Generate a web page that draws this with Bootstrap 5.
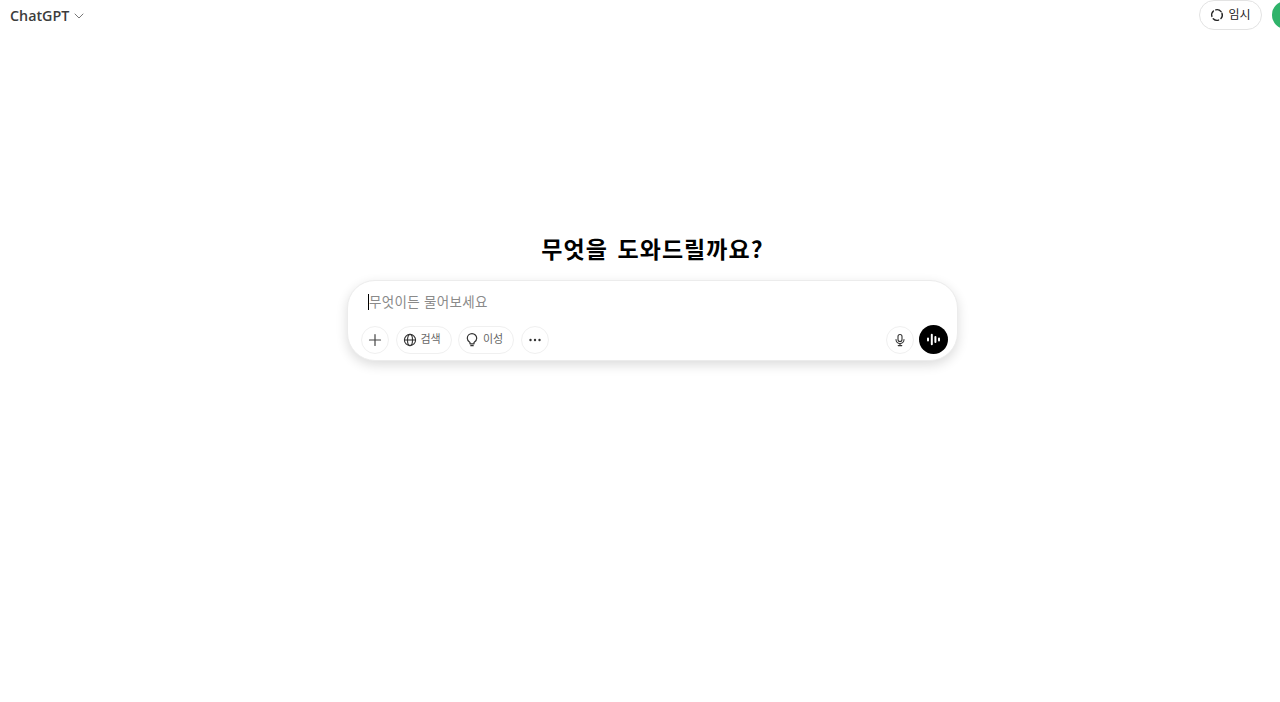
<!DOCTYPE html>
<html lang="ko">
<head>
    <meta charset="UTF-8" />
    <meta name="viewport" content="width=device-width, initial-scale=1.0" />
    <title>ChatGPT</title>
    <link href="https://cdn.jsdelivr.net/npm/bootstrap@5.3.0/dist/css/bootstrap.min.css" rel="stylesheet" />
    <style>
        html, body {
            height: 100%;
            overflow: hidden;
        }

        body {
            background-color: #fff;
            font-family: "Open Sans", "Noto Sans CJK KR", sans-serif;
            color: #0d0d0d;
        }

        .top-bar {
            height: 30px;
            padding-left: 10px;
            margin-right: -20px;
        }

        .model-name {
            font-family: "Open Sans", "Noto Sans", sans-serif;
            font-size: 14.3px;
            font-weight: 600;
            color: #3d3d3d;
            line-height: 30px;
            margin-top: 1px;
        }

        .temp-btn {
            width: 63px;
            height: 30px;
            border: 1px solid #e3e3e3;
            border-radius: 15px;
            font-size: 12px;
            color: #222;
            background: #fff;
            margin-right: 10px;
        }

        .avatar-dot {
            width: 28px;
            height: 28px;
            border-radius: 50%;
            background-color: #2fb36a;
            flex-shrink: 0;
        }

        .chat-main {
            padding-left: 25px;
            padding-top: 203px;
        }

        .chat-title {
            font-family: "Noto Sans CJK KR", sans-serif;
            font-size: 23px;
            font-weight: 700;
            line-height: 30px;
            color: #000;
            margin-bottom: 17px;
            letter-spacing: 1.05px;
            word-spacing: 2px;
        }

        .composer {
            width: 611px;
            height: 81px;
            border: 1px solid #ececec;
            border-radius: 28px;
            background: #fff;
            box-shadow: 0 4px 12px rgba(0, 0, 0, .14);
            padding: 0 9px 6px 13px;
        }

        .composer-input {
            height: 41px;
            padding-left: 7px;
            font-size: 13.5px;
            line-height: 24px;
            color: #8a8a8a;
            letter-spacing: .35px;
        }

        .caret-line {
            width: 1px;
            height: 16px;
            background: #000;
        }

        .tool-btn {
            height: 28px;
            border: 1px solid #f0f0f0;
            border-radius: 14px;
            background: #fff;
            font-size: 11px;
            color: #666;
            padding: 0;
        }

        .tool-round {
            width: 28px;
        }

        .tool-pill {
            width: 56px;
            padding-left: 6px;
        }

        .tool-row {
            gap: 6.5px;
        }

        .voice-row {
            gap: 5px;
        }

        .voice-btn {
            width: 29px;
            height: 29px;
            border-radius: 50%;
            background: #000;
        }
    </style>
</head>
<body>
    <header class="top-bar d-flex justify-content-between align-items-start">
        <div class="d-flex align-items-center gap-1">
            <span class="model-name">ChatGPT</span>
            <svg width="12" height="12" viewBox="0 0 12 12" fill="none" stroke="#777" stroke-width="1" stroke-linecap="round" stroke-linejoin="round"><path d="M2 4l4 4 4-4" /></svg>
        </div>
        <div class="d-flex align-items-center">
            <button type="button" class="temp-btn d-flex align-items-center justify-content-center gap-1 p-0">
                <svg width="14" height="14" viewBox="0 0 14 14" fill="none" stroke="#222" stroke-width="1.4" stroke-linecap="round"><circle cx="7" cy="7" r="5.3" stroke-dasharray="5.6 2.73" transform="rotate(-20 7 7)" /></svg>
                <span>임시</span>
            </button>
            <span class="avatar-dot"></span>
        </div>
    </header>

    <main class="chat-main d-flex flex-column align-items-center">
        <h1 class="chat-title text-center">무엇을 도와드릴까요?</h1>
        <div class="composer d-flex flex-column justify-content-between">
            <div class="composer-input d-flex align-items-center align-self-start">
                <span class="caret-line"></span><span>무엇이든 물어보세요</span>
            </div>
            <div class="d-flex justify-content-between align-items-center">
                <div class="tool-row d-flex align-items-center">
                    <button type="button" class="tool-btn tool-round d-flex align-items-center justify-content-center">
                        <svg width="14" height="14" viewBox="0 0 14 14" fill="none" stroke="#444" stroke-width="1.2" stroke-linecap="round"><path d="M7 1.5v11M1.5 7h11" /></svg>
                    </button>
                    <button type="button" class="tool-btn tool-pill d-flex align-items-center gap-1">
                        <svg width="14" height="14" viewBox="0 0 14 14" fill="none" stroke="#333" stroke-width="1.1"><circle cx="7" cy="7" r="5.6" /><ellipse cx="7" cy="7" rx="2.5" ry="5.6" /><path d="M1.4 7h11.2" /></svg>
                        <span>검색</span>
                    </button>
                    <button type="button" class="tool-btn tool-pill d-flex align-items-center gap-1">
                        <svg width="14" height="15" viewBox="0 0 14 15" fill="none" stroke="#333" stroke-width="1.2" stroke-linecap="round" stroke-linejoin="round"><path d="M5 10.6C3.4 9.7 2.3 8.2 2.3 6.3a4.7 4.7 0 0 1 9.4 0c0 1.9-1.1 3.4-2.7 4.3v1.2H5z" /><path d="M5.8 13.7h2.4" /></svg>
                        <span>이성</span>
                    </button>
                    <button type="button" class="tool-btn tool-round d-flex align-items-center justify-content-center">
                        <svg width="14" height="14" viewBox="0 0 14 14" fill="#333"><circle cx="2.5" cy="7" r="1.2" /><circle cx="7" cy="7" r="1.2" /><circle cx="11.5" cy="7" r="1.2" /></svg>
                    </button>
                </div>
                <div class="voice-row d-flex align-items-center">
                    <button type="button" class="tool-btn tool-round d-flex align-items-center justify-content-center">
                        <svg width="14" height="14" viewBox="0 0 14 14" fill="none" stroke="#333" stroke-width="1.1" stroke-linecap="round"><rect x="5" y="1.5" width="4" height="7" rx="2" /><path d="M3 6.5a4 4 0 0 0 8 0M7 10.5v2M5.2 12.6h3.6" /></svg>
                    </button>
                    <span class="voice-btn d-flex align-items-center justify-content-center">
                        <svg width="17" height="17" viewBox="0 0 17 17" fill="none" stroke="#fff" stroke-width="2" stroke-linecap="round"><path d="M3 7.6v1.8M6.8 3.8v9.4M10.4 6v5M14 7.6v1.8" /></svg>
                    </span>
                </div>
            </div>
        </div>
    </main>

    <script src="https://cdn.jsdelivr.net/npm/bootstrap@5.3.0/dist/js/bootstrap.bundle.min.js"></script>
</body>
</html>
